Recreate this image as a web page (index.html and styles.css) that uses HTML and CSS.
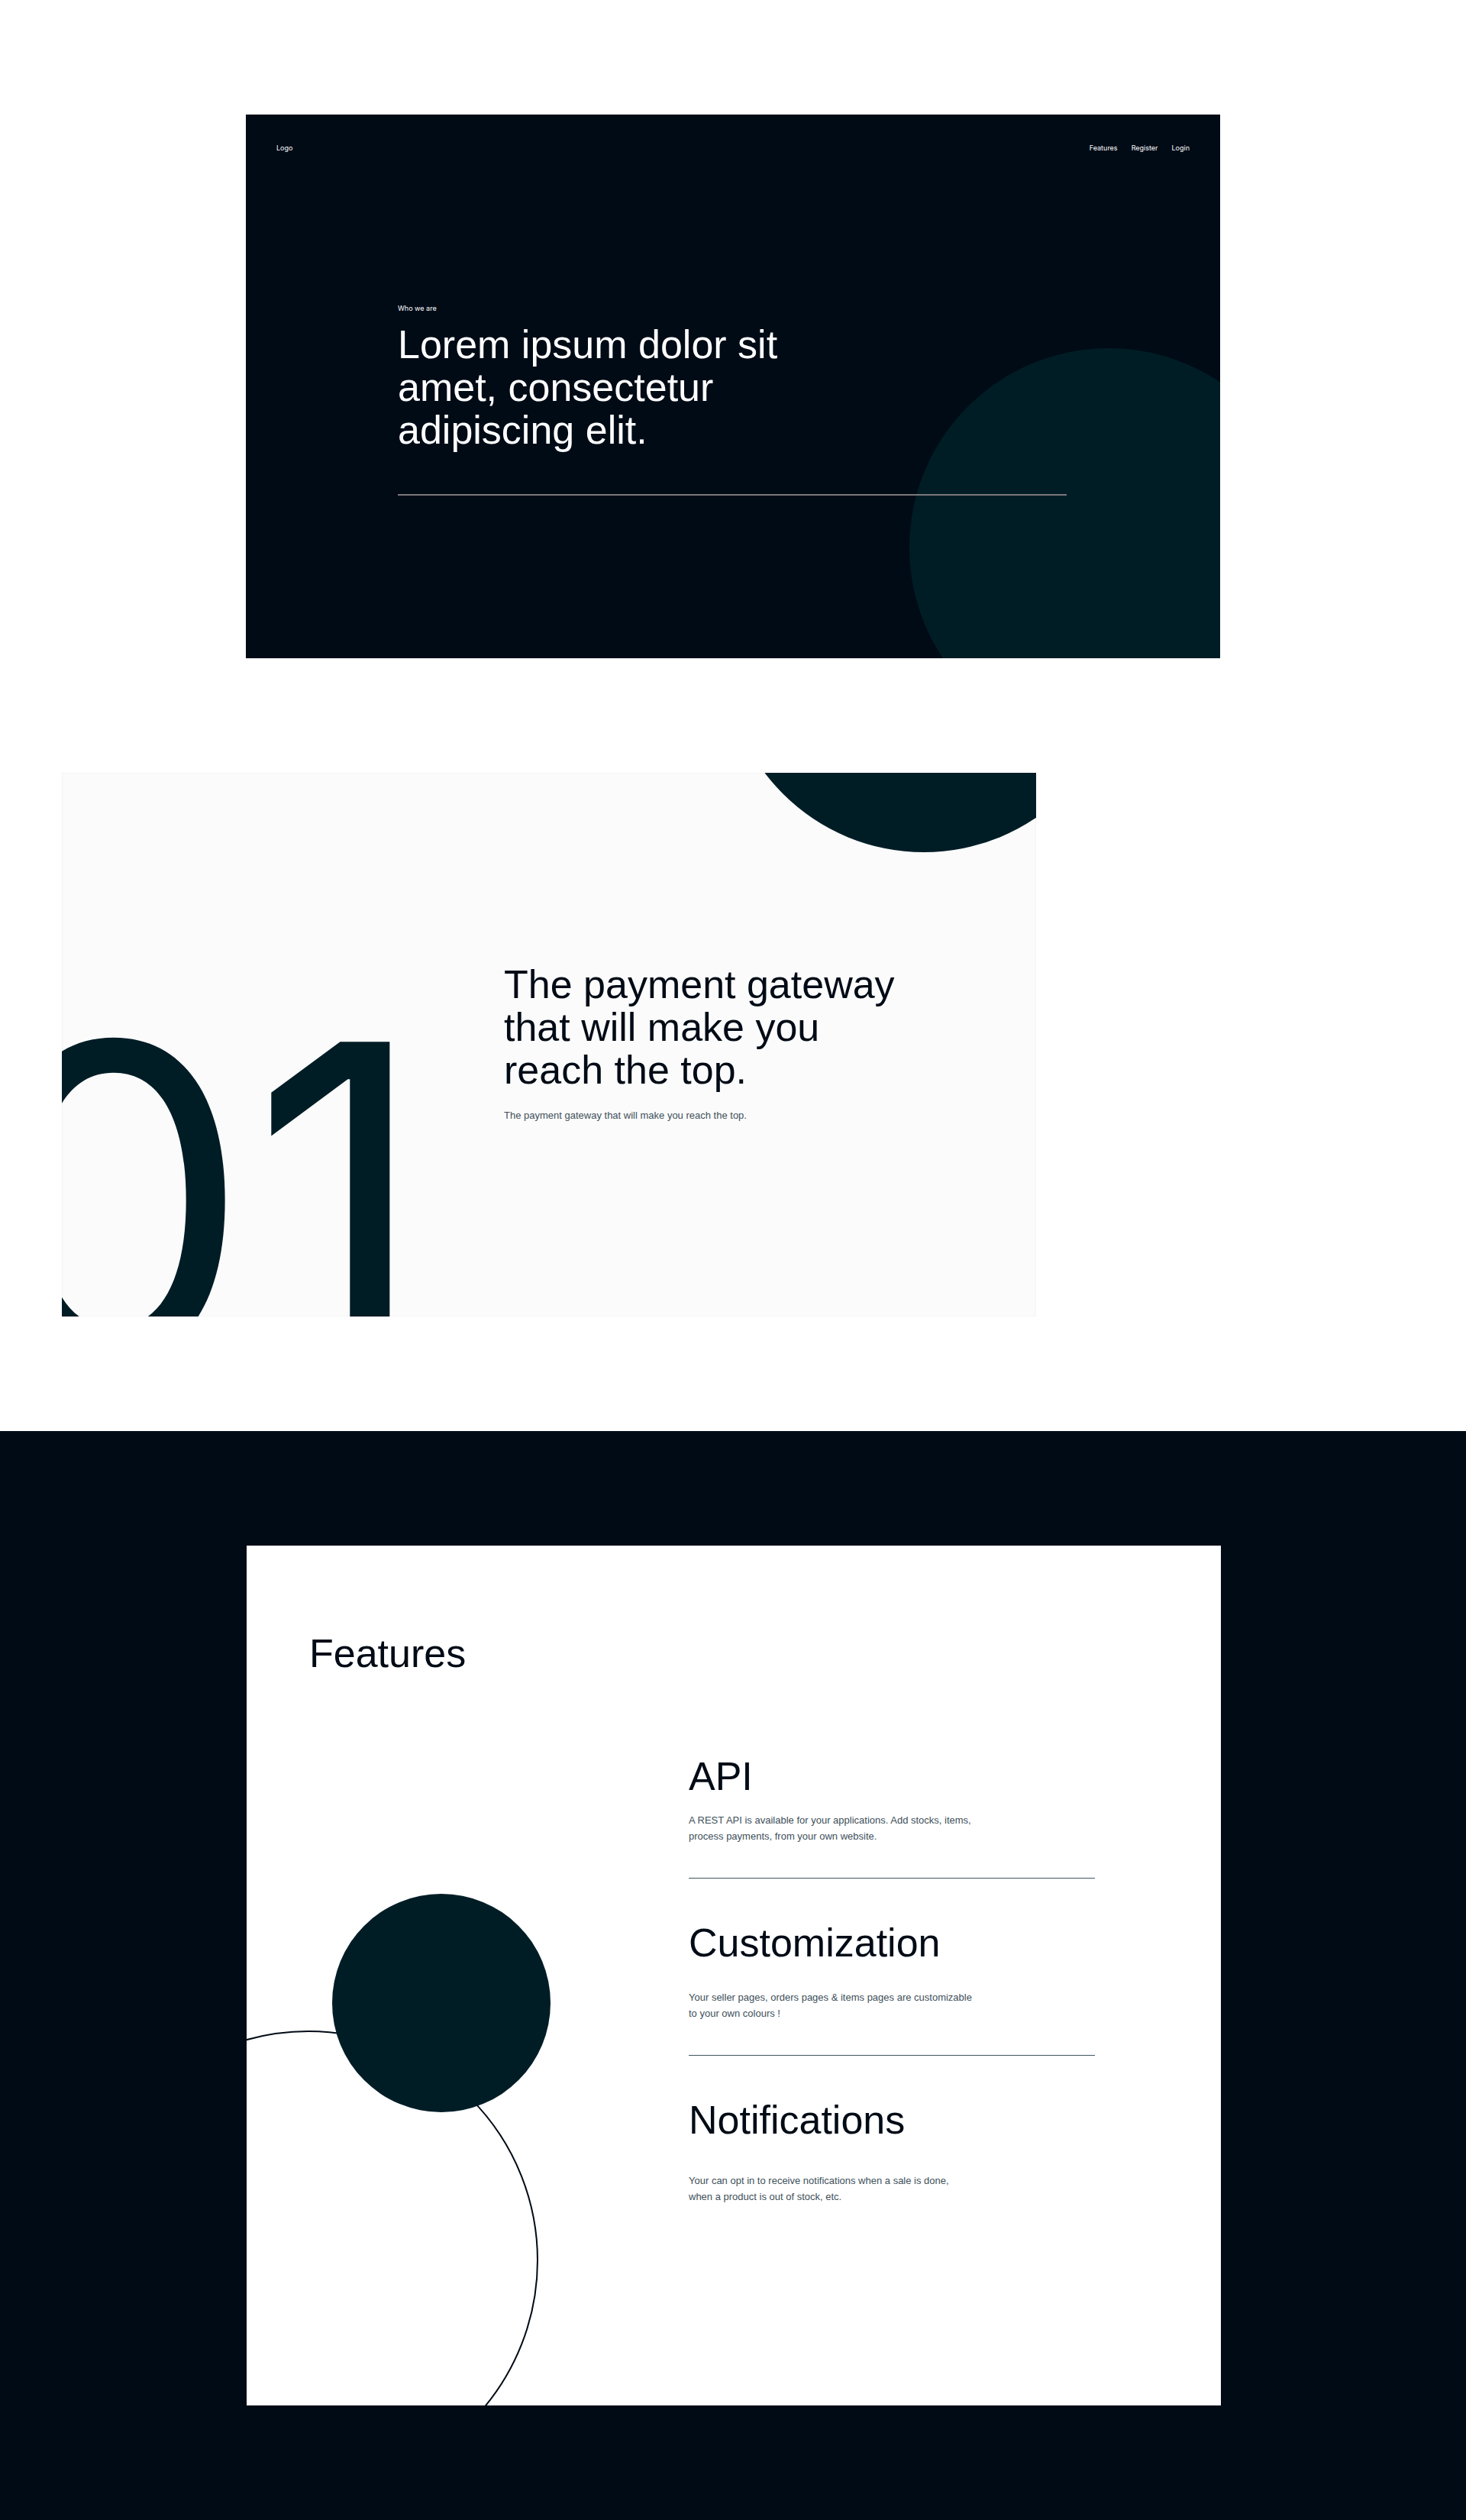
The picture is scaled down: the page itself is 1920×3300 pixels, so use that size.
FILE: index.html
```html
<!DOCTYPE html>
<html lang="en">
<head>
  <meta charset="utf-8">
  <meta name="viewport" content="width=device-width, initial-scale=1">
  <title>Payment gateway</title>
  <link rel="stylesheet" href="styles.css">
</head>
<body>
  <header class="hero">
    <div class="disc disc-hero"></div>
    <nav class="nav">
      <a class="nav-link" href="#">Logo</a>
      <div class="nav-links">
        <a class="nav-link" href="#features">Features</a>
        <a class="nav-link" href="#register">Register</a>
        <a class="nav-link" href="#login">Login</a>
      </div>
    </nav>
    <div class="hero-body">
      <p class="eyebrow">Who we are</p>
      <h1 class="title">Lorem ipsum dolor sit<br>amet, consectetur<br>adipiscing elit.</h1>
      <hr class="hero-rule">
    </div>
  </header>

  <section class="pitch">
    <div class="disc disc-pitch"></div>
    <div class="number">01</div>
    <div class="pitch-body">
      <h2 class="title">The payment gateway<br>that will make you<br>reach the top.</h2>
      <p class="text">The payment gateway that will make you reach the top.</p>
    </div>
  </section>

  <main class="features" id="features">
    <div class="card">
      <div class="ring"></div>
      <div class="disc disc-card"></div>
      <h2 class="title">Features</h2>
      <div class="feature-list">
        <article class="feature">
          <h3 class="title">API</h3>
          <p class="text">A REST API is available for your applications. Add stocks, items,<br>process payments, from your own website.</p>
        </article>
        <article class="feature feature-spaced">
          <h3 class="title">Customization</h3>
          <p class="text">Your seller pages, orders pages &amp; items pages are customizable<br>to your own colours !</p>
        </article>
        <article class="feature feature-wide">
          <h3 class="title">Notifications</h3>
          <p class="text">Your can opt in to receive notifications when a sale is done,<br>when a product is out of stock, etc.</p>
        </article>
      </div>
    </div>
  </main>
</body>
</html>
```
FILE: styles.css
```css
:root {
  --ink: #000b16;
  --teal: #001d26;
  --muted: #40505a;
}

* {
  box-sizing: border-box;
}

body {
  margin: 0;
  background: #fff;
  color: var(--ink);
  font-family: "Liberation Sans", Arial, sans-serif;
}

.title {
  margin: 0;
  font-size: 52px;
  line-height: 56px;
  font-weight: 400;
}

.text {
  margin: 0;
  color: var(--muted);
  font-size: 13px;
  line-height: 21px;
}

.disc {
  position: absolute;
  border-radius: 50%;
  background: var(--teal);
}

/* Hero */
.hero {
  position: relative;
  overflow: hidden;
  margin: 150px 322px;
  background: var(--ink);
  color: #fff;
}

.disc-hero {
  right: -115px;
  bottom: -116px;
  width: 522px;
  height: 522px;
}

.nav {
  position: relative;
  display: flex;
  justify-content: space-between;
  padding: 36px 40px;
}

.nav-links {
  display: flex;
  gap: 18px;
}

.nav-link {
  color: #fff;
  font-family: Inter, "Liberation Sans", sans-serif;
  font-size: 9px;
  line-height: 16px;
  text-decoration: none;
}

.hero-body {
  position: relative;
  padding: 158px 201px 213px 199px;
}

.eyebrow {
  margin: 0 0 11px;
  font-family: Inter, "Liberation Sans", sans-serif;
  font-size: 9px;
  line-height: 16px;
}

.hero-rule {
  height: 2px;
  margin: 56px 0 0;
  border: 0;
  background: #7d777b;
}

/* Pitch */
.pitch {
  position: relative;
  overflow: hidden;
  margin: 0 563px 150px 81px;
  padding: 249px 0 253px 579px;
  background: #fbfbfb;
  box-shadow: inset 0 0 0 1px #f5f5f5;
}

.disc-pitch {
  top: -418px;
  right: -114px;
  width: 522px;
  height: 522px;
}

.number {
  position: absolute;
  bottom: -133px;
  left: -112px;
  color: var(--teal);
  font-family: Inter, "Liberation Sans", sans-serif;
  font-size: 570px;
  line-height: 570px;
}

.pitch-body {
  position: relative;
}

.pitch .text {
  margin-top: 21px;
}

/* Features */
.features {
  padding: 150px 321px 150px 323px;
  background: var(--ink);
}

.card {
  position: relative;
  overflow: hidden;
  padding: 113px 165px 263px 82px;
  background: #fff;
}

.ring {
  position: absolute;
  bottom: -111px;
  left: -220px;
  width: 602px;
  height: 602px;
  border: 2px solid var(--ink);
  border-radius: 50%;
}

.disc-card {
  top: 456px;
  left: 112px;
  width: 286px;
  height: 286px;
}

.feature-list {
  position: relative;
  margin: 105px 0 0 497px;
}

.feature {
  display: grid;
  gap: 19px;
}

.feature-spaced {
  gap: 33px;
}

.feature-wide {
  gap: 41px;
}

.feature + .feature {
  margin-top: 44px;
  padding-top: 56px;
  border-top: 1px solid #41565f;
}

@media (max-width: 1300px) {
  .hero,
  .pitch {
    margin-right: 40px;
    margin-left: 40px;
  }

  .features {
    padding: 80px 40px;
  }
}
```
